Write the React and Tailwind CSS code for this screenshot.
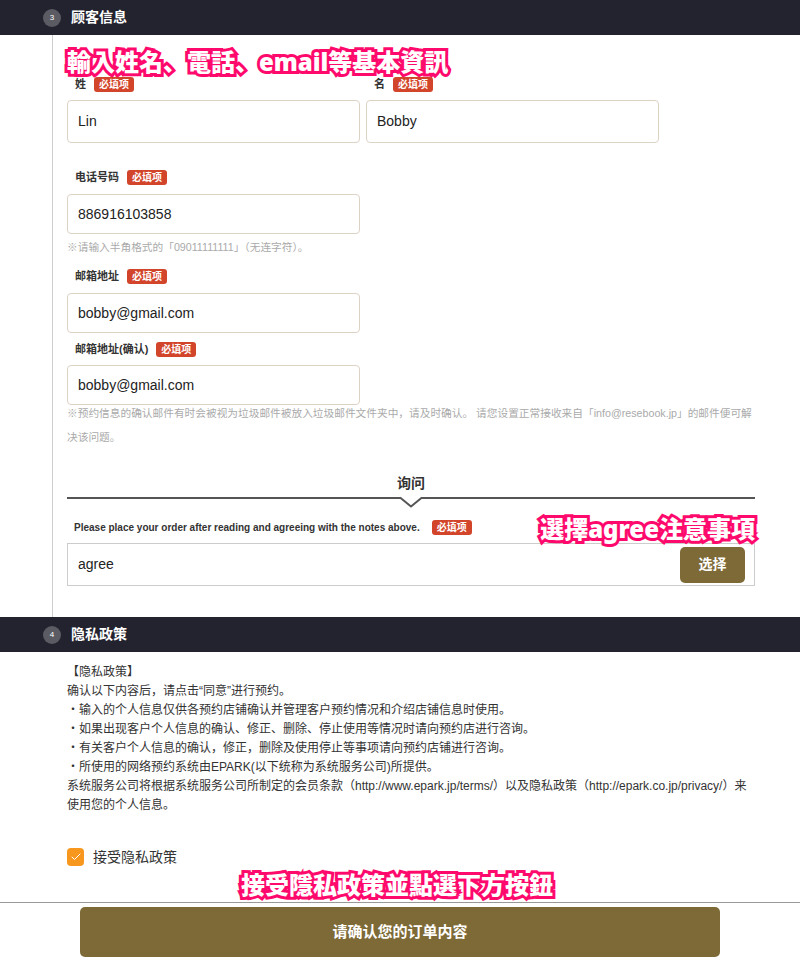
import { Check } from "lucide-react";

const font = { fontFamily: '"Liberation Sans", "Noto Sans CJK SC", sans-serif' };

// Red "required" tag next to each label
const Required = () => (
  <span className="ml-[8px] inline-flex h-[15px] items-center rounded-[3px] bg-[#d2452b] px-[5px] text-[10px] font-bold leading-none tracking-normal text-white">
    必填项
  </span>
);

// Pink outlined overlay caption
const Note = ({ children, className = "" }) => (
  <div
    className={`h-[28px] text-[24px] font-black leading-[28px] text-white [-webkit-text-stroke:6px_#ff0a6c] [paint-order:stroke_fill] ${className}`}
    style={{ fontFamily: '"Noto Sans", "Noto Sans CJK JP", sans-serif' }}
  >
    {children}
  </div>
);

const SectionHead = ({ num, title }) => (
  <div className="flex h-[35px] items-center bg-[#23232f] pl-[43px]">
    <span className="flex h-[18px] w-[18px] items-center justify-center rounded-full bg-[#5b5b63] text-[8px] text-white">
      {num}
    </span>
    <span className="ml-[10px] text-[14px] font-bold text-white">{title}</span>
  </div>
);

const Field = ({ label, value, tall = false, gap = "mt-[9px]", className = "" }) => (
  <div className={className}>
    <div className="flex h-[15px] items-center pl-[8px] text-[11px] font-bold leading-[15px] text-[#333]">
      {label}
      <Required />
    </div>
    <div
      className={`${gap} flex ${tall ? "h-[43px]" : "h-[40px]"} w-[293px] items-center rounded-[4px] border border-[#ddd3c5] px-[10px] text-[14px] text-[#222]`}
    >
      {value}
    </div>
  </div>
);

export default function App() {
  const privacy = [
    "【隐私政策】",
    "确认以下内容后，请点击“同意”进行预约。",
    "・输入的个人信息仅供各预约店铺确认并管理客户预约情况和介绍店铺信息时使用。",
    "・如果出现客户个人信息的确认、修正、删除、停止使用等情况时请向预约店进行咨询。",
    "・有关客户个人信息的确认，修正，删除及使用停止等事项请向预约店铺进行咨询。",
    "・所使用的网络预约系统由EPARK(以下统称为系统服务公司)所提供。",
    "系统服务公司将根据系统服务公司所制定的会员条款（http://www.epark.jp/terms/）以及隐私政策（http://epark.co.jp/privacy/）来使用您的个人信息。",
  ];

  return (
    <div className="h-[958px] w-[800px] overflow-hidden bg-white" style={font}>
      <SectionHead num="3" title="顾客信息" />

      {/* customer info, with the grey rail on the left */}
      <div className="ml-[52px] border-l border-[#ccc] pb-[31px] pl-[14px] pr-[45px] pt-[13px]">
        <Note>輸入姓名、電話、email等基本資訊</Note>

        <div className="mt-[1px] flex gap-[6px]">
          <Field label="姓" value="Lin" tall gap="mt-[8px]" />
          <Field label="名" value="Bobby" tall gap="mt-[8px]" />
        </div>

        <Field className="mt-[27px]" label="电话号码" value="886916103858" />
        <p className="mt-[5px] text-[10.7px] leading-[16px] text-[#aaa]">
          ※请输入半角格式的「09011111111」（无连字符）。
        </p>

        <Field className="mt-[14px]" label="邮箱地址" value="bobby@gmail.com" />
        <Field className="mt-[9px]" gap="mt-[8px]" label="邮箱地址(确认)" value="bobby@gmail.com" />
        <p className="mt-[-4px] text-[10.7px] leading-[24px] text-[#aaa]">
          ※预约信息的确认邮件有时会被视为垃圾邮件被放入垃圾邮件文件夹中，请及时确认。 请您设置正常接收来自「info@resebook.jp」的邮件便可解决该问题。
        </p>

        {/* inquiry */}
        <div className="mt-[24px] text-center text-[14px] font-bold leading-[20px] text-[#333]">询问</div>
        <div className="relative mt-[4px] h-[2px] bg-[#555]">
          <svg
            className="absolute left-1/2 top-[-1px] -translate-x-1/2"
            width="22"
            height="12"
            viewBox="0 0 22 12"
          >
            <path d="M0 1 H22 L11 11 Z" fill="#fff" />
            <path d="M0 1.5 L11 10.5 L22 1.5" fill="none" stroke="#555" strokeWidth="2" />
          </svg>
        </div>

        <div className="flex h-[44px] items-end justify-between">
          <div className="mb-[8px] flex h-[15px] items-center pl-[7px] text-[10px] font-bold leading-[15px] text-[#333]">
            Please place your order after reading and agreeing with the notes above.
            <span className="ml-[4px]" />
            <Required />
          </div>
          <Note>選擇agree注意事項</Note>
        </div>
        <div className="flex h-[43px] items-center justify-between border border-[#ccc] pl-[10px] pr-[9px]">
          <span className="text-[14px] text-[#222]">agree</span>
          <button className="h-[36px] w-[65px] rounded-[5px] bg-[#7d6a37] text-[14px] font-bold text-white">
            选择
          </button>
        </div>
      </div>

      <SectionHead num="4" title="隐私政策" />

      {/* privacy policy */}
      <div className="pl-[67px] pr-[52px] pt-[11px] text-[12px] leading-[19px] text-[#333]">
        {privacy.map((line, i) => (
          <p key={i}>{line}</p>
        ))}

        <label className="mt-[33px] flex h-[18px] items-center">
          <span className="flex h-[18px] w-[17px] items-center justify-center rounded-[4px] bg-[#f7971e]">
            <Check size={12} strokeWidth={2} color="#fff" />
          </span>
          <span className="ml-[9px] text-[14px]">接受隐私政策</span>
        </label>
      </div>

      <div className="mt-[5px] flex justify-center pr-[6px]">
        <Note>接受隱私政策並點選下方按鈕</Note>
      </div>

      <div className="mt-[3px] border-t border-[#999] pt-[4px]">
        <button className="mx-auto flex h-[50px] w-[640px] items-center justify-center rounded-[5px] bg-[#7d6a37] text-[15px] font-bold text-white">
          请确认您的订单内容
        </button>
      </div>
    </div>
  );
}
